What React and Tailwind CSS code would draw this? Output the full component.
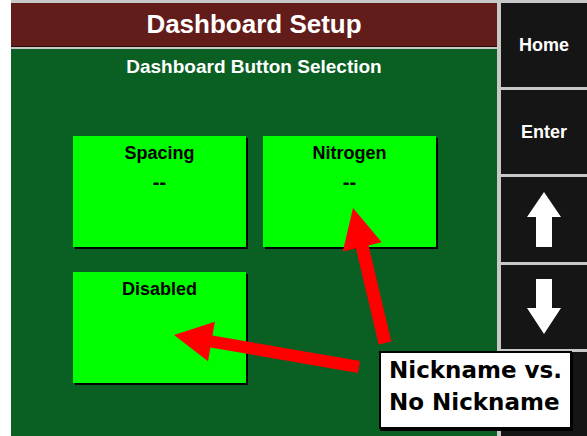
import React from 'react';

const cards = [
  { name: 'Spacing', value: '--' },
  { name: 'Nitrogen', value: '--' },
  { name: 'Disabled', value: '' },
];

// Build a block arrow outline from tail to tip
const arrowPoints = (tail, tip, shaft, headLen, headWidth) => {
  const dx = tip[0] - tail[0];
  const dy = tip[1] - tail[1];
  const len = Math.hypot(dx, dy);
  const ux = dx / len;
  const uy = dy / len;
  const px = -uy;
  const py = ux;
  const bx = tip[0] - ux * headLen;
  const by = tip[1] - uy * headLen;
  const s = shaft / 2;
  const h = headWidth / 2;
  const pts = [
    [tail[0] + px * s, tail[1] + py * s],
    [bx + px * s, by + py * s],
    [bx + px * h, by + py * h],
    tip,
    [bx - px * h, by - py * h],
    [bx - px * s, by - py * s],
    [tail[0] - px * s, tail[1] - py * s],
  ];
  return pts.map((p) => p.join(',')).join(' ');
};

const SideButton = ({ children }) => (
  <div className="flex-1 bg-[#151515] flex items-center justify-center text-white text-[18px] font-bold">
    {children}
  </div>
);

const UpArrow = () => (
  <svg width="34" height="56" viewBox="0 0 34 56">
    <polygon points="17,0 34,25 25,25 25,55 9,55 9,25 0,25" fill="#fff" />
  </svg>
);

const DownArrow = () => (
  <svg width="34" height="56" viewBox="0 0 34 56">
    <polygon points="9,0 25,0 25,29 34,29 17,55 0,29 9,29" fill="#fff" />
  </svg>
);

export default function App() {
  return (
    <div
      className="relative w-[587px] h-[436px] overflow-hidden bg-white pl-[11px]"
      style={{ fontFamily: '"Liberation Sans", Arial, sans-serif' }}
    >
      <div className="h-full flex gap-[4px] bg-[#c8c8c8] pt-[3px]">
        {/* main panel */}
        <div className="w-[486px] flex flex-col gap-[2px]">
          <div className="h-[44px] bg-[#621c1a] border-b border-[#2a0a08] flex items-center justify-center text-white text-[26px] font-bold">
            Dashboard Setup
          </div>
          <div className="flex-1 bg-[#0a5f22] flex flex-col">
            <div className="pt-[7px] text-center text-white text-[19px] leading-[22px] font-bold">
              Dashboard Button Selection
            </div>
            <div className="mt-[58px] pl-[62px] grid grid-cols-[173px_173px] gap-x-[17px] gap-y-[25px]">
              {cards.map((c) => (
                <div
                  key={c.name}
                  className="h-[111px] bg-[#00ff00] shadow-[2px_2px_0_#000] flex flex-col items-center pt-[6px] text-black font-bold"
                >
                  <span className="text-[18px] leading-[22px]">{c.name}</span>
                  {c.value && (
                    <span className="mt-[7px] text-[20px] leading-[22px]">{c.value}</span>
                  )}
                </div>
              ))}
            </div>
          </div>
        </div>

        {/* side buttons */}
        <div className="flex-1 flex flex-col gap-[3px]">
          <SideButton>Home</SideButton>
          <SideButton>Enter</SideButton>
          <SideButton>
            <UpArrow />
          </SideButton>
          <SideButton>
            <DownArrow />
          </SideButton>
          <SideButton />
        </div>
      </div>

      {/* callout arrows */}
      <svg className="absolute inset-0 pointer-events-none" width="587" height="436">
        <polygon points={arrowPoints([385, 343], [353, 208], 13, 40, 40)} fill="#ff0000" />
        <polygon points={arrowPoints([359, 367], [174, 335], 12, 38, 40)} fill="#ff0000" />
      </svg>

      <div
        className="absolute left-[379px] top-[351px] w-[193px] h-[78px] bg-white border-2 border-black shadow-[1px_2px_0_#000] pl-[8px] pt-[1px] text-black text-[23px] leading-[32px] font-bold"
        style={{ fontFamily: '"DejaVu Sans", sans-serif' }}
      >
        Nickname vs.
        <br />
        No Nickname
      </div>
    </div>
  );
}
